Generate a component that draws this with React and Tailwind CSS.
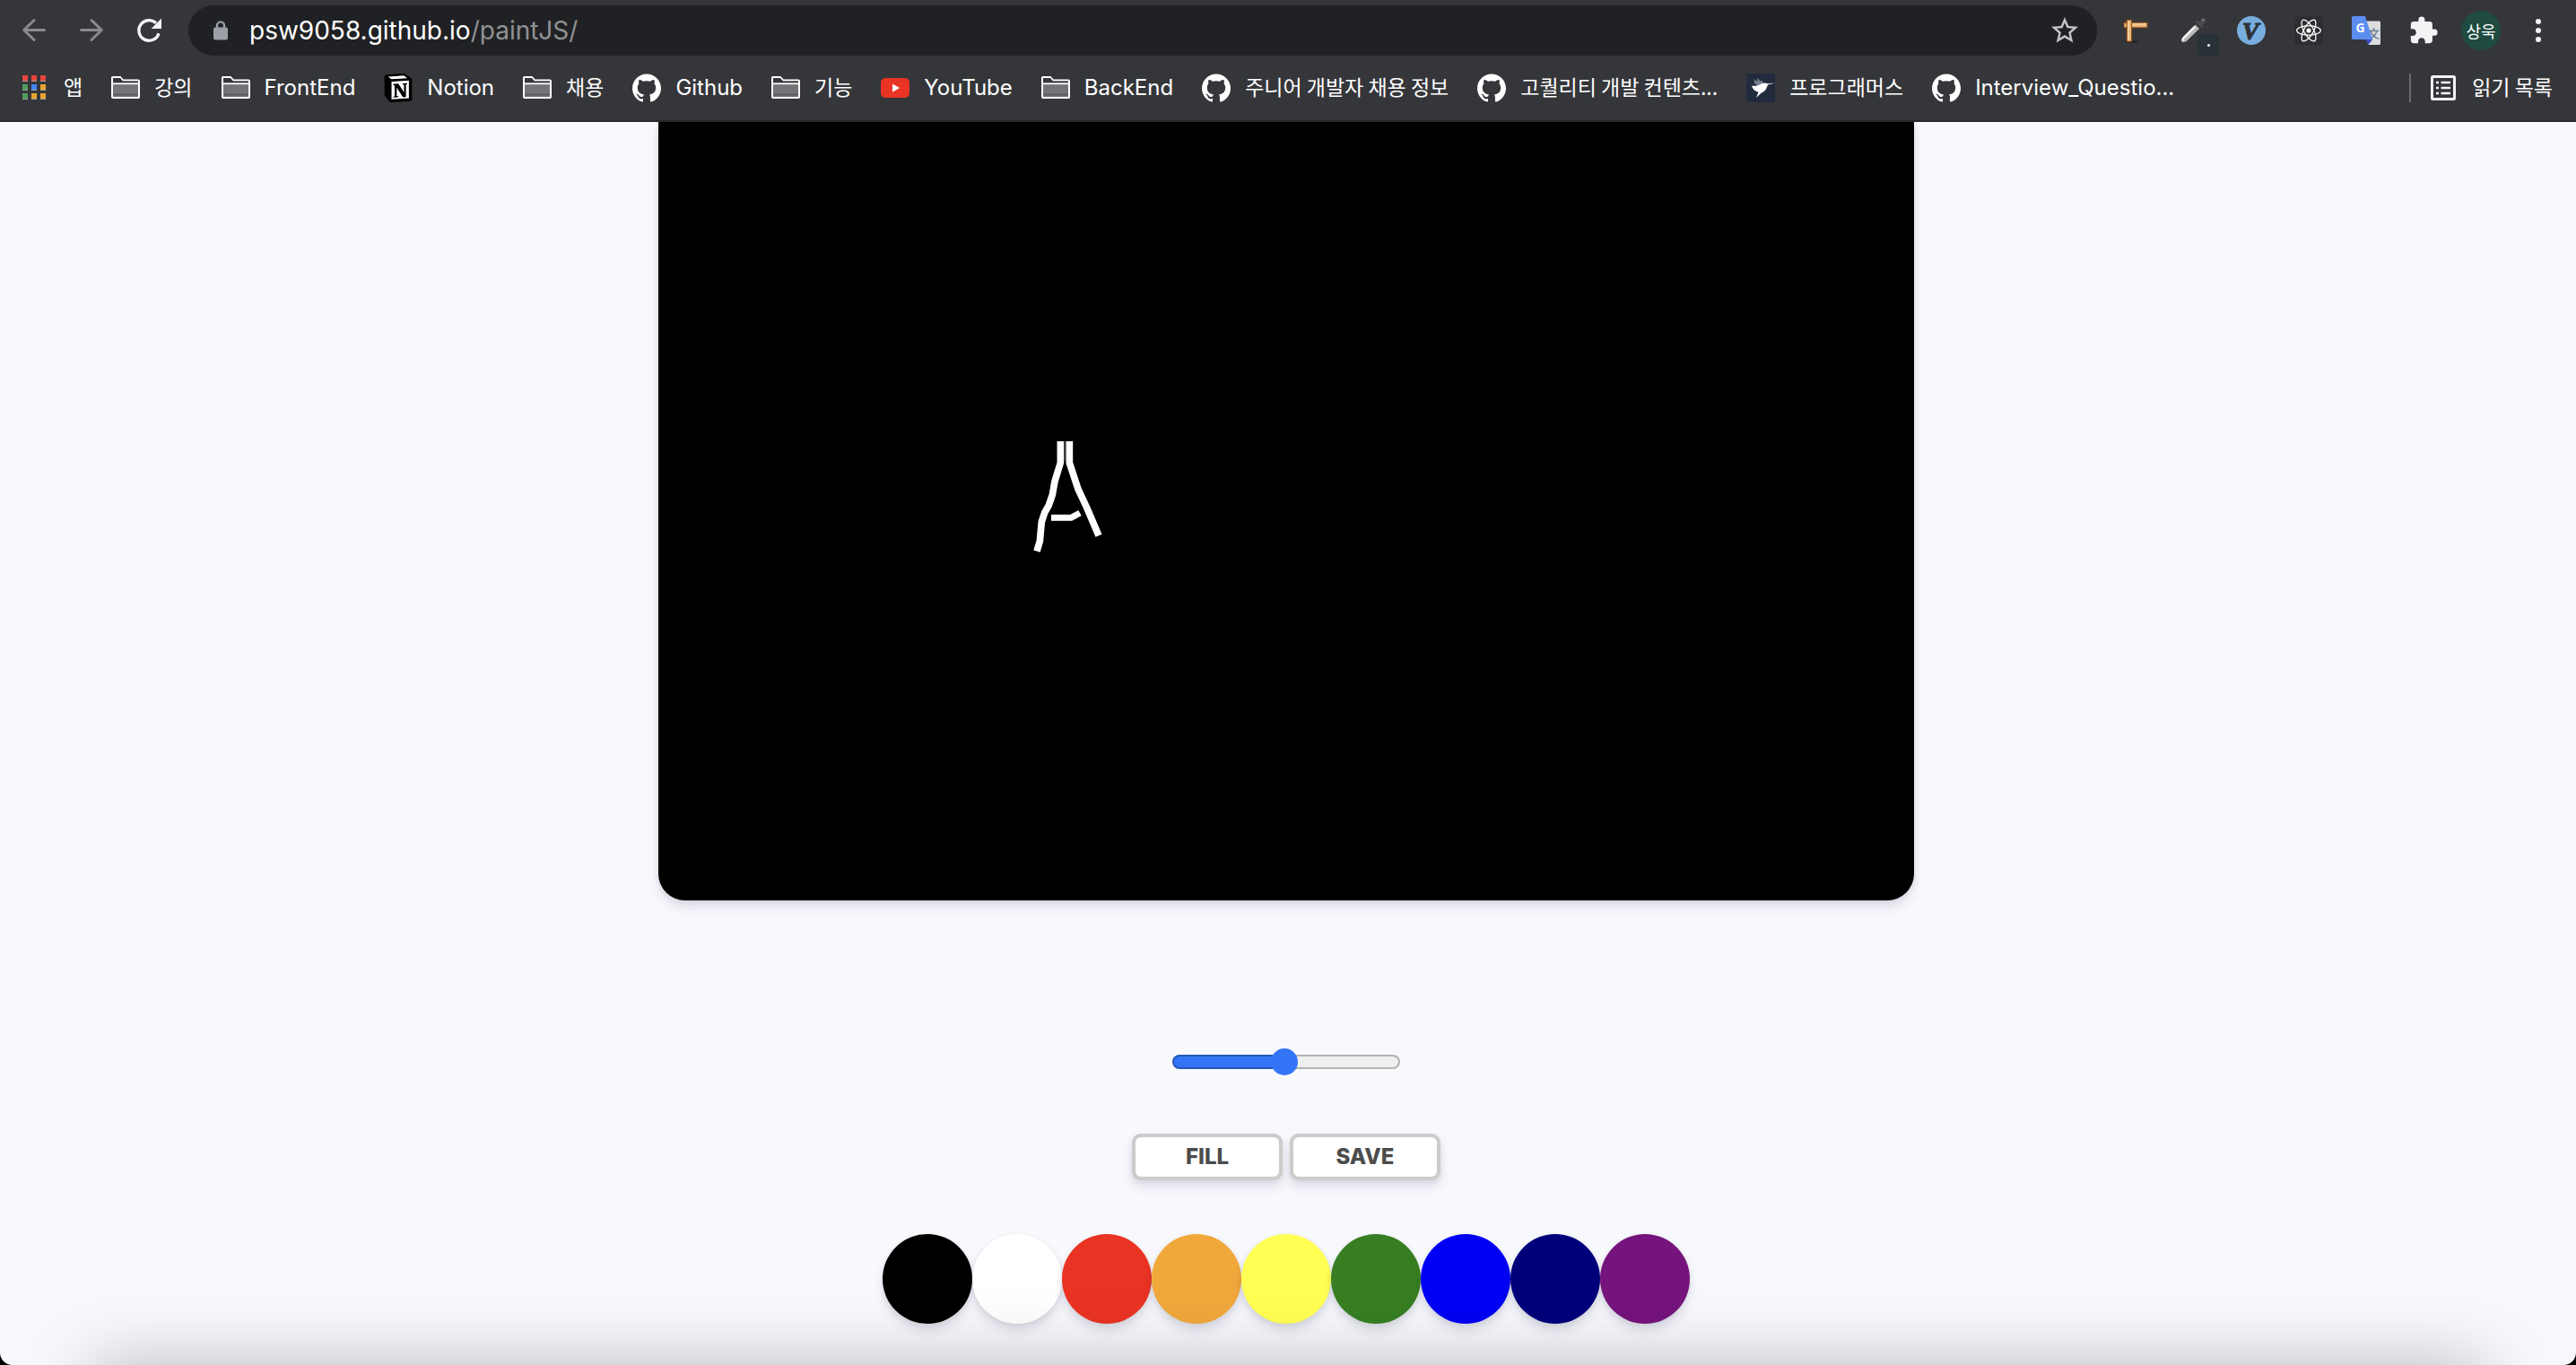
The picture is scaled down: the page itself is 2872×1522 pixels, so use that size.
import React, { useState } from "react";
import { SiGithub, SiNotion, SiReact } from "react-icons/si";
import { MdExtension, MdStarBorder } from "react-icons/md";

function BackIcon({ className = "" }) {
  return (
    <svg viewBox="0 0 32 32" className={`size-8 ${className}`} fill="none" stroke="#8a8b8e" strokeWidth="3" strokeLinecap="round" strokeLinejoin="round">
      <path d="M27.5 15.5H5M16 4.5 4.7 15.5 16 26.5" />
    </svg>
  );
}

function ReloadIcon() {
  return (
    <svg viewBox="0 0 32 32" className="size-8" fill="none">
      <path d="M27 19.2A11.3 11.3 0 1 1 24 7.8" stroke="#f1f3f4" strokeWidth="3.4" />
      <path d="M30 2.6V14H18.6z" fill="#f1f3f4" />
    </svg>
  );
}

function LockIcon() {
  return (
    <svg viewBox="0 0 16 22" className="h-[22px] w-4" fill="none">
      <path d="M4 9V5.4a4 4 0 0 1 8 0V9" stroke="#9aa0a6" strokeWidth="2.4" />
      <rect y="7.6" width="16" height="14" rx="2" fill="#9aa0a6" />
    </svg>
  );
}

function RulerIcon() {
  return (
    <svg viewBox="0 0 32 32" className="size-8">
      <ellipse cx="10" cy="28.6" rx="8" ry="1.4" fill="#222326" />
      <rect x="2" y="7.2" width="26" height="5.6" fill="#e9b679" stroke="#8a4b16" strokeWidth="1" />
      <rect x="5.2" y="4.2" width="5.4" height="24" fill="#e9b679" stroke="#8a4b16" strokeWidth="1" />
      <path d="M12 8.8h15M7 6v21" stroke="#fbe3bd" strokeWidth="1.6" strokeDasharray="1.4 1" />
    </svg>
  );
}

function DropperIcon() {
  return (
    <svg viewBox="0 0 32 32" className="size-8">
      <path d="m22.5 6.5 3.5-3.8c2-1.6 4.8 1 3.2 3.2l-3.6 3.6 1.6 2-2 2-7.4-7 2-2z" fill="#4a4b4e" />
      <path d="m25 5 2-1.6" stroke="#85868a" strokeWidth="2" />
      <path d="M17.6 9.6 22 14 7.4 28.2l-4 1L2 27.6 3.2 24z" fill="#b9b9b9" />
      <path d="M17.2 11.6 4.4 24.4l-1.2 2.8" stroke="#f4f4f4" strokeWidth="2.4" fill="none" />
    </svg>
  );
}

function VimiumIcon() {
  return (
    <svg viewBox="0 0 32 32" className="size-8">
      <circle cx="16" cy="16" r="16" fill="#78aede" />
      <text x="15" y="26" textAnchor="middle" fontFamily="Liberation Serif, serif" fontWeight="700" fontStyle="italic" fontSize="28" fill="#2f3338" stroke="#2f3338" strokeWidth="1.2">V</text>
    </svg>
  );
}

function TranslateIcon() {
  return (
    <svg viewBox="0 0 32 32" className="size-8">
      <path d="M13 5.6h17.5A1.5 1.5 0 0 1 32 7v23.4a1.5 1.5 0 0 1-1.5 1.5H18.5z" fill="#dcdddf" />
      <text x="24.6" y="23.5" textAnchor="middle" fontFamily="Noto Sans CJK SC, sans-serif" fontWeight="500" fontSize="13" fill="#64798a">文</text>
      <path d="M15.5 26h7.7l-4.7 6z" fill="#3a4fc0" />
      <path d="M1.5 0H15l8.2 26H1.5A1.5 1.5 0 0 1 0 24.5v-23A1.5 1.5 0 0 1 1.5 0z" fill="#5b8cf0" />
      <text x="9.5" y="18" textAnchor="middle" fontFamily="Open Sans, sans-serif" fontWeight="700" fontSize="14" fill="#fff">G</text>
    </svg>
  );
}

function AppsIcon() {
  const colors = ["#e8453c", "#e8453c", "#e8453c", "#4f9d5b", "#4285f4", "#e8a431", "#4f9d5b", "#e8a431", "#e8a431"];
  return (
    <svg viewBox="0 0 26 28" className="h-7 w-[26px]">
      {colors.map((c, i) => (
        <g key={i}>
          <rect x={(i % 3) * 10} y={Math.floor(i / 3) * 10 + 1} width="6" height="6" fill="#9c9da0" />
          <rect x={(i % 3) * 10} y={Math.floor(i / 3) * 10} width="6" height="6" fill={c} />
        </g>
      ))}
    </svg>
  );
}

function FolderIcon() {
  return (
    <svg viewBox="0 0 32 32" className="size-8" fill="none">
      <path d="M1 8h30v18H1z" fill="#737477" />
      <path d="M2 22.5h28v2H2z" fill="#5c5d60" />
      <path d="M1 26V4.5a.5.5 0 0 1 .5-.5H10l3 3.500h17a1 1 0 0 1 1 1V26a1 1 0 0 1-1 1H2a1 1 0 0 1-1-1z" stroke="#fff" strokeWidth="2" />
      <path d="M2 5h8l3 3.500h17v2H2z" fill="#35363a" />
      <path d="M1 11.300h30" stroke="#fff" strokeWidth="1.700" />
    </svg>
  );
}

function NotionIcon() {
  return (
    <span className="grid size-8 place-items-center">
      <svg viewBox="0 0 24 24" className="col-start-1 row-start-1 size-8">
        <path d="M2 1.500 17 .4l5.400 3.800v17.600L7 23 1.600 17z" fill="#000" />
        <path d="M3.600 2.600 16.500 1.600l3.600 2.600L6.600 5zM6.400 6.800l14.500-.9v14.800l-14.500.9z" fill="#fff" />
      </svg>
      <SiNotion className="col-start-1 row-start-1 size-8 text-black" />
    </span>
  );
}

function YouTubeIcon() {
  return (
    <svg viewBox="0 0 32 32" className="size-8">
      <rect y="5" width="32" height="22" rx="5" fill="#e93323" />
      <path d="M13 11.500v9.200l8-4.600z" fill="#fff" />
    </svg>
  );
}

function HummingbirdIcon() {
  return (
    <svg viewBox="0 0 32 32" className="size-8">
      <rect width="32" height="32" rx="3" fill="#212b3d" />
      <path d="M9 11 8.500 6l3.500 3 .5-4 3.500 4 1-2 2.500 5-5 2.500z" fill="#76808e" />
      <path d="M6 13.500c4 1 7-.3 9.500-1.200 2.200-1.300 4-2.300 6.500-1.600l2 .5 8-.6-8 1.900c-1.500 4-2.500 7.300-7.500 9.300L11 27l2.500-6.200C9.500 19.500 7 17.500 6 13.500z" fill="#fff" />
    </svg>
  );
}

function ReadingListIcon() {
  return (
    <svg viewBox="0 0 28 28" className="size-7" fill="none">
      <rect x="1.500" y="1.500" width="25" height="25" rx="1" stroke="#f1f3f4" strokeWidth="3" />
      <path d="M6 8h3M6 14h3M6 20h3M11.500 8H22M11.500 14H22M11.500 20H22" stroke="#f1f3f4" strokeWidth="2.500" />
    </svg>
  );
}

const github = <SiGithub className="size-8 text-white" />;

const bookmarks = [
  { icon: <FolderIcon />, label: "강의", ko: true },
  { icon: <FolderIcon />, label: "FrontEnd" },
  { icon: <NotionIcon />, label: "Notion" },
  { icon: <FolderIcon />, label: "채용", ko: true },
  { icon: github, label: "Github" },
  { icon: <FolderIcon />, label: "기능", ko: true },
  { icon: <YouTubeIcon />, label: "YouTube" },
  { icon: <FolderIcon />, label: "BackEnd" },
  { icon: github, label: "주니어 개발자 채용 정보", ko: true },
  { icon: github, label: "고퀄리티 개발 컨텐츠...", ko: true },
  { icon: <HummingbirdIcon />, label: "프로그래머스", ko: true },
  { icon: github, label: "Interview_Questio..." },
];

const KO = "pb-1 text-[23px] font-['Noto_Sans_CJK_KR',sans-serif]";
const EN = "text-[24px] font-['Inter',sans-serif]";

function Bookmark({ icon, label, ko }) {
  return (
    <a href="#" className="flex shrink-0 items-center gap-4">
      {icon}
      <span className={`leading-8 whitespace-nowrap text-white ${ko ? KO : EN}`}>{label}</span>
    </a>
  );
}

function ToolButton({ label, children }) {
  return (
    <button type="button" aria-label={label} className="relative flex h-14 w-16 shrink-0 items-center justify-center">
      {children}
    </button>
  );
}

function BrowserBar() {
  return (
    <header className="border-b-2 border-[#282828] bg-[#35363a] pb-1.5">
      <div className="flex h-[68px] items-center pr-2.5 pl-1.5">
        <ToolButton label="Back"><BackIcon /></ToolButton>
        <ToolButton label="Forward"><BackIcon className="-scale-x-100" /></ToolButton>
        <ToolButton label="Reload"><ReloadIcon /></ToolButton>
        <div className="mx-3 flex h-14 min-w-0 grow items-center rounded-full bg-[#202124] pr-[18px] pl-7">
          <LockIcon />
          <div
            role="textbox"
            aria-label="Address"
            contentEditable
            suppressContentEditableWarning
            className="ml-6 grow font-['Inter',sans-serif] text-[28px] leading-10 text-white"
          >
            psw9058.github.io<span className="text-[#909194]">/paintJS/</span>
          </div>
          <button type="button" aria-label="Bookmark this page">
            <MdStarBorder className="size-9 text-[#c3c4c6]" />
          </button>
        </div>
        <ToolButton label="Page ruler"><RulerIcon /></ToolButton>
        <ToolButton label="Color picker">
          <DropperIcon />
          <span className="absolute right-1 bottom-0 flex size-6 items-center justify-center rounded bg-[#283237]">
            <span className="size-[3px] rounded-full bg-white" />
          </span>
        </ToolButton>
        <ToolButton label="Vimium"><VimiumIcon /></ToolButton>
        <ToolButton label="React Developer Tools">
          <span className="flex size-8 items-center justify-center rounded-sm bg-[#2d2e31]">
            <SiReact className="size-7 text-white" />
          </span>
        </ToolButton>
        <ToolButton label="Translate"><TranslateIcon /></ToolButton>
        <ToolButton label="Extensions"><MdExtension className="size-[34px] text-[#f1f3f4]" /></ToolButton>
        <ToolButton label="Profile">
          <span className="flex size-11 items-center justify-center rounded-full bg-[#1f4b40] font-['Noto_Sans_CJK_KR',sans-serif] text-[18px] leading-none text-white">
            상욱
          </span>
        </ToolButton>
        <ToolButton label="Menu">
          <span className="flex flex-col gap-1">
            <span className="size-1.5 rounded-full bg-[#f1f3f4]" />
            <span className="size-1.5 rounded-full bg-[#f1f3f4]" />
            <span className="size-1.5 rounded-full bg-[#f1f3f4]" />
          </span>
        </ToolButton>
      </div>
      <nav aria-label="Bookmarks" className="flex h-[60px] items-center gap-8 pr-[26px] pl-[25px]">
        <a href="#" className="flex items-center gap-5">
          <AppsIcon />
          <span className={`leading-8 text-white ${KO}`}>앱</span>
        </a>
        {bookmarks.map((b) => <Bookmark key={b.label} {...b} />)}
        <button type="button" className="ml-auto flex shrink-0 items-center">
          <span className="mr-[22px] h-8 w-0.5 bg-[#6b6c6f]" />
          <ReadingListIcon />
          <span className={`ml-[18px] leading-8 text-white ${KO}`}>읽기 목록</span>
        </button>
      </nav>
    </header>
  );
}

const SHADOW = "shadow-[0_8px_12px_rgba(50,50,93,0.11),0_2px_6px_rgba(0,0,0,0.08)]";

const palette = [
  { name: "Black", bg: "bg-black" },
  { name: "White", bg: "bg-white" },
  { name: "Red", bg: "bg-[#ea3323]" },
  { name: "Orange", bg: "bg-[#f1a83b]" },
  { name: "Yellow", bg: "bg-[#ffff54]" },
  { name: "Green", bg: "bg-[#377e22]" },
  { name: "Blue", bg: "bg-[#0000f5]" },
  { name: "Navy", bg: "bg-[#00007b]" },
  { name: "Purple", bg: "bg-[#75147c]" },
];

function Drawing() {
  return (
    <svg viewBox="0 0 420 480" className="mt-[334px] ml-[386px] h-40 w-[140px]" fill="none" stroke="#fff" strokeWidth="23" strokeLinejoin="round">
      <path d="M187 66v72L168 200l-8 45-12 35-14 25-10 30-6 65-10 34" />
      <path d="M217 66v72l29 88 29 62 40 94" />
      <path d="M156 322h66l30-16" strokeWidth="21" />
      <path d="M202 66v66" stroke="#444" strokeWidth="5" />
    </svg>
  );
}

function ControlButton({ children }) {
  return (
    <button
      type="button"
      className={`h-[52px] w-[168px] rounded-[10px] border-4 border-[#ccc] bg-white font-['Inter',sans-serif] text-[24px] leading-none font-extrabold text-[#4c4c4c] ${SHADOW}`}
    >
      {children}
    </button>
  );
}

export default function App() {
  const [size, setSize] = useState(2.5);
  const share = ((size - 0.1) / 4.9) * 100;
  return (
    <div className="flex min-h-screen flex-col bg-black">
      <BrowserBar />
      <main className="relative flex grow flex-col items-center overflow-hidden rounded-b-[14px] bg-[#f8f9fd] pr-1">
        <div role="img" aria-label="Drawing canvas" className={`h-[868px] w-full max-w-[1400px] rounded-b-[30px] bg-black ${SHADOW}`}>
          <Drawing />
        </div>
        <input
          type="range"
          aria-label="Brush size"
          min="0.1"
          max="5"
          step="0.1"
          value={size}
          onChange={(e) => setSize(Number(e.target.value))}
          style={{ "--share": `${share}%` }}
          className="mt-[164px] h-8 w-[254px] appearance-none bg-transparent [&::-webkit-slider-runnable-track]:h-4 [&::-webkit-slider-runnable-track]:rounded-full [&::-webkit-slider-runnable-track]:border-2 [&::-webkit-slider-runnable-track]:border-[#000]/25 [&::-webkit-slider-runnable-track]:bg-[linear-gradient(to_right,#3375f6_var(--share),#efefef_var(--share))] [&::-webkit-slider-runnable-track]:[background-origin:border-box] [&::-webkit-slider-thumb]:-mt-[9px] [&::-webkit-slider-thumb]:size-[30px] [&::-webkit-slider-thumb]:appearance-none [&::-webkit-slider-thumb]:rounded-full [&::-webkit-slider-thumb]:bg-[#3375f6]"
        />
        <div className="mt-16 flex gap-2">
          <ControlButton>FILL</ControlButton>
          <ControlButton>SAVE</ControlButton>
        </div>
        <div className="mt-[60px] mb-[46px] flex">
          {palette.map((c) => (
            <button key={c.name} type="button" aria-label={c.name} className={`size-[100px] rounded-full ${c.bg} ${SHADOW}`} />
          ))}
        </div>
        <div className="pointer-events-none absolute inset-x-[100px] -bottom-[100px] h-[100px] shadow-[0_0_80px_rgba(0,0,0,0.26)]" />
      </main>
    </div>
  );
}
